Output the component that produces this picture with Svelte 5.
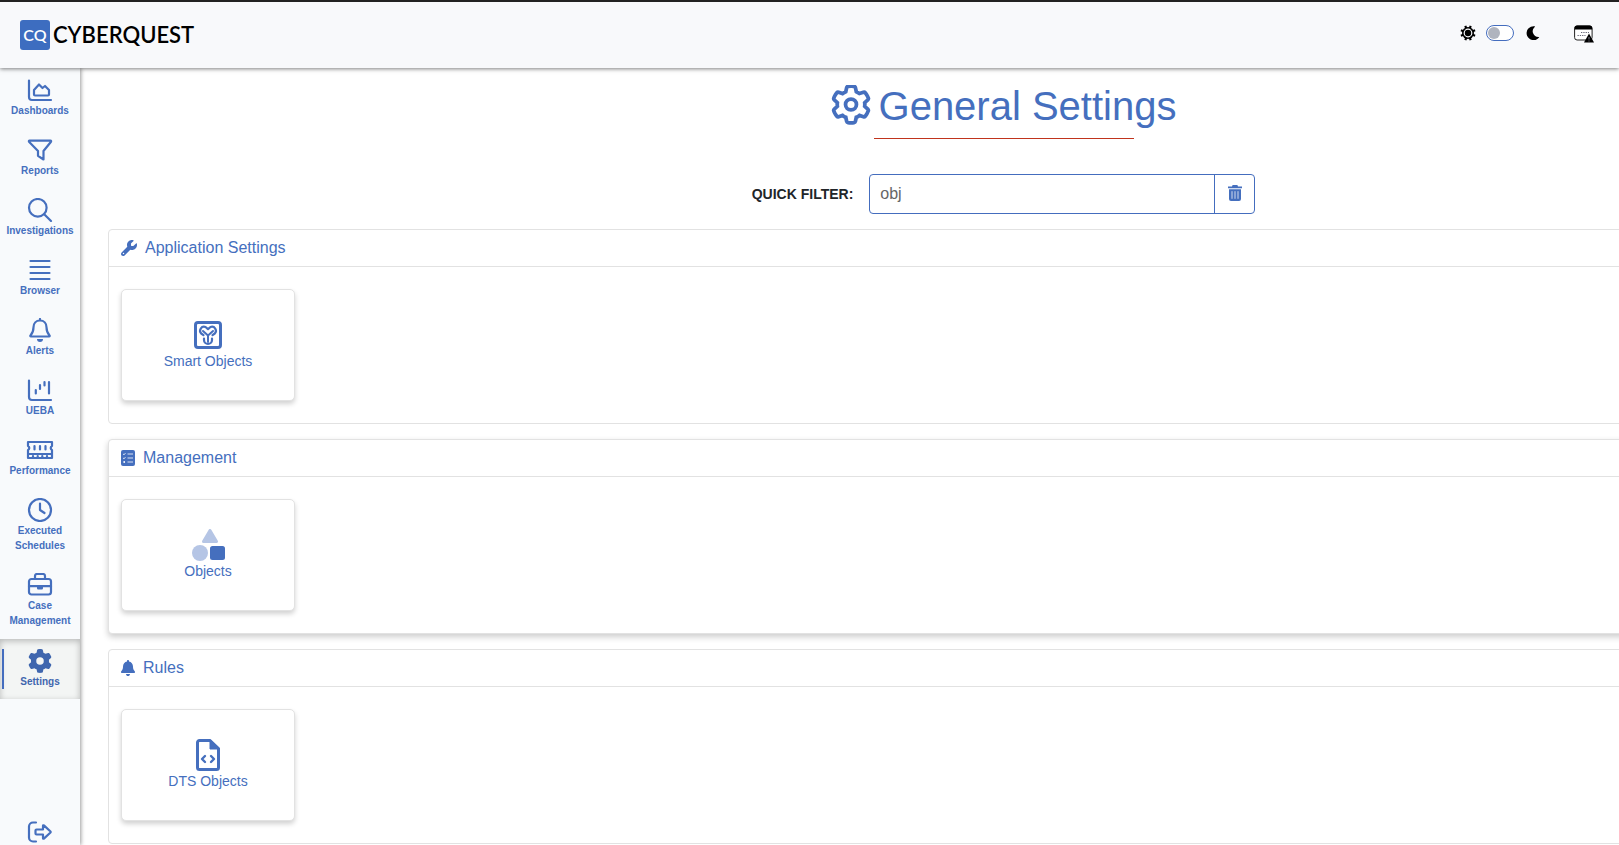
<script lang="ts">
  type Card = { label: string; icon: string };
  type Section = { title: string; icon: string; raised?: boolean; cards: Card[] };

  const gear =
    "M495.9 166.6c3.2 8.7 .5 18.4-6.4 24.6l-43.3 39.4c1.1 8.3 1.7 16.8 1.7 25.4s-.6 17.1-1.7 25.4l43.3 39.4c6.9 6.2 9.6 15.9 6.4 24.6c-4.4 11.9-9.7 23.3-15.8 34.3l-4.7 8.1c-6.6 11-14 21.4-22.1 31.2c-5.9 7.2-15.7 9.6-24.5 6.8l-55.7-17.7c-13.4 10.3-28.2 18.9-44 25.4l-12.5 57.1c-2 9.1-9 16.3-18.2 17.8c-13.8 2.3-28 3.5-42.5 3.5s-28.7-1.2-42.5-3.5c-9.2-1.5-16.2-8.7-18.2-17.8l-12.5-57.1c-15.8-6.5-30.6-15.1-44-25.4L83.1 425.9c-8.8 2.8-18.6 .3-24.5-6.8c-8.1-9.8-15.5-20.2-22.1-31.2l-4.7-8.1c-6.1-11-11.4-22.4-15.8-34.3c-3.2-8.7-.5-18.4 6.4-24.6l43.3-39.4C64.6 273.1 64 264.6 64 256s.6-17.1 1.7-25.4L22.4 191.2c-6.9-6.2-9.6-15.9-6.4-24.6c4.4-11.9 9.7-23.3 15.8-34.3l4.7-8.1c6.6-11 14-21.4 22.1-31.2c5.9-7.2 15.7-9.6 24.5-6.8l55.7 17.7c13.4-10.3 28.2-18.9 44-25.4l12.5-57.1c2-9.1 9-16.3 18.2-17.8C227.3 1.2 241.5 0 256 0s28.7 1.2 42.5 3.5c9.2 1.5 16.2 8.7 18.2 17.8l12.5 57.1c15.8 6.5 30.6 15.1 44 25.4l55.7-17.7c8.8-2.8 18.6-.3 24.5 6.8c8.1 9.8 15.5 20.2 22.1 31.2l4.7 8.1c6.1 11 11.4 22.4 15.8 34.3z";

  const nav = [
    { label: "Dashboards", icon: "area" },
    { label: "Reports", icon: "filter" },
    { label: "Investigations", icon: "search" },
    { label: "Browser", icon: "lines" },
    { label: "Alerts", icon: "bell" },
    { label: "UEBA", icon: "candles" },
    { label: "Performance", icon: "memory" },
    { label: "Executed Schedules", icon: "clock" },
    { label: "Case Management", icon: "briefcase" },
    { label: "Settings", icon: "gear", active: true }
  ];

  const sections: Section[] = [
    { title: "Application Settings", icon: "wrench", cards: [{ label: "Smart Objects", icon: "smart" }] },
    { title: "Management", icon: "list", raised: true, cards: [{ label: "Objects", icon: "shapes" }] },
    { title: "Rules", icon: "bellSolid", cards: [{ label: "DTS Objects", icon: "code" }] }
  ];

  let dark = $state(false);
  let query = $state("obj");

  let visible = $derived(
    sections
      .map((s) => ({ ...s, cards: s.cards.filter((c) => c.label.toLowerCase().includes(query.toLowerCase())) }))
      .filter((s) => s.cards.length > 0)
  );
</script>

{#snippet navIcon(name: string)}
  <svg class="nav-icon" viewBox="0 0 28 24" fill="none" stroke="currentColor" stroke-width="2.2" stroke-linecap="round" stroke-linejoin="round" aria-hidden="true">
    {#if name === "area"}
      <path d="M3 2.500v16.500a3 3 0 0 0 3 3h19" />
      <path d="M8 15.500V12l5-5.500 3.500 3.500 2.500-2 4 4v4.500a1 1 0 0 1-1 1H9a1 1 0 0 1-1-1z" />
    {:else if name === "filter"}
      <path d="M3.500 2.700h21c.6 0 .8.600.5 1L17.500 13v8.500L12 17.800V13L3 3.700c-.3-.4-.1-1 .5-1z" />
    {:else if name === "search"}
      <circle cx="11.800" cy="9.800" r="8.800" />
      <path d="M18.200 16.200L25 23" />
    {:else if name === "lines"}
      <path d="M4.500 3h19M4.500 9h19M4.500 15h19M4.500 21h19" />
    {:else if name === "bell"}
      <path d="M14 1v1.500M14 2.500c-4 0-6.500 3-6.500 6.700 0 3.500-.8 5.800-3 8.300-.4.500-.2 1 .4 1h18.200c.6 0 .8-.500.4-1-2.200-2.500-3-4.800-3-8.300 0-3.700-2.500-6.700-6.500-6.700z" />
      <path d="M11 21h6a3 3 0 0 1-6 0z" fill="currentColor" stroke="none" />
    {:else if name === "candles"}
      <path d="M3 2.500v16.500a3 3 0 0 0 3 3h19M9.800 12v3.500M14 7v4M18.500 4v3.500M23 4v11.500" />
    {:else if name === "memory"}
      <path d="M2 4h24v4a2.200 2.200 0 0 0 0 4v8H2v-8a2.200 2.200 0 0 0 0-4z" />
      <path d="M2.500 16h23M8.500 8v3.500M14 8v3.500M19.500 8v3.500M7 18v2M11.700 18v2M16.300 18v2M21 18v2" />
    {:else if name === "clock"}
      <circle cx="14" cy="12" r="11" />
      <path d="M14 5.500V12l4.500 3" />
    {:else if name === "briefcase"}
      <rect x="3" y="6" width="22" height="15.500" rx="2.500" />
      <path d="M9 5.500V3a2 2 0 0 1 2-2h6a2 2 0 0 1 2 2v2.500M3 13.200h22" />
      <path d="M11 13.200h6v2a1.200 1.200 0 0 1-1.200 1.200h-3.600a1.200 1.200 0 0 1-1.200-1.200z" fill="currentColor" stroke="none" />
    {:else if name === "gear"}
      <path transform="translate(2 0) scale(.046875)" fill="currentColor" stroke="none" fill-rule="evenodd" d="{gear}M256 336a80 80 0 1 0 0-160 80 80 0 1 0 0 160z" />
    {:else if name === "logout"}
      <path d="M10 2.500H7a4 4 0 0 0-4 4v11a4 4 0 0 0 4 4h3" />
      <path d="M10.500 9.500H17V5.800c0-.5.500-.7.900-.4l6.600 6.100c.3.300.3.700 0 1l-6.600 6.100c-.4.300-.9.100-.9-.4v-3.700h-6.500a1 1 0 0 1-1-1v-3a1 1 0 0 1 1-1z" />
    {/if}
  </svg>
{/snippet}

{#snippet sectionIcon(name: string)}
  {#if name === "wrench"}
    <svg width="16" height="16" viewBox="0 0 512 512" fill="currentColor" aria-hidden="true">
      <path d="M352 320c88.400 0 160-71.600 160-160c0-15.300-2.200-30.100-6.200-44.200c-3.100-10.800-16.400-13.200-24.300-5.300l-76.800 76.800c-3 3-7.100 4.700-11.300 4.700H336c-8.800 0-16-7.200-16-16V118.600c0-4.200 1.700-8.300 4.700-11.300l76.800-76.800c7.900-7.900 5.400-21.200-5.300-24.300C382.100 2.200 367.300 0 352 0C263.600 0 192 71.600 192 160c0 19.100 3.400 37.500 9.500 54.500L19.900 396.100C7.200 408.800 0 426.100 0 444.100C0 481.600 30.400 512 67.900 512c18 0 35.300-7.200 48-19.900L297.500 310.500c17 6.200 35.400 9.500 54.500 9.500zM80 408a24 24 0 1 1 0 48 24 24 0 1 1 0-48z" />
    </svg>
  {:else if name === "list"}
    <svg width="14" height="16" viewBox="0 0 14 16" fill="none" stroke="#fff" aria-hidden="true">
      <rect width="14" height="16" rx="2" fill="currentColor" stroke="none" />
      <path d="M6.500 4H12M6.500 8H12M6.500 12H12" stroke-opacity=".8" />
      <path d="M2.200 4l.8.800 1.400-1.600M2.200 8l.8.800 1.400-1.600" stroke-width=".9" />
      <circle cx="3.200" cy="12" r=".9" fill="#fff" stroke="none" />
    </svg>
  {:else}
    <svg width="14" height="16" viewBox="0 0 448 512" fill="currentColor" aria-hidden="true">
      <path d="M224 0c-17.700 0-32 14.300-32 32V51.200C119 66 64 130.600 64 208v18.800c0 47-17.300 92.400-48.500 127.600l-7.400 8.300c-8.400 9.400-10.400 22.900-5.300 34.400S19.400 416 32 416H416c12.600 0 24-7.400 29.200-18.900s3.100-25-5.300-34.400l-7.400-8.300C401.300 319.200 384 273.900 384 226.800V208c0-77.400-55-142-128-156.800V32c0-17.700-14.300-32-32-32zm45.300 493.300c12-12 18.700-28.300 18.700-45.300H160c0 17 6.700 33.300 18.700 45.300s28.300 18.700 45.300 18.700s33.300-6.700 45.300-18.700z" />
    </svg>
  {/if}
{/snippet}

{#snippet cardIcon(name: string)}
  <svg class="card-icon" viewBox="0 0 36 32" fill="none" stroke="currentColor" stroke-linecap="round" stroke-linejoin="round" aria-hidden="true">
    {#if name === "smart"}
      <rect x="5.500" y="3.500" width="25" height="25" rx="2.500" stroke-width="3" />
      <path d="M18 23v-6.500l-5-4.500M18 16.500l5-4.500" stroke-width="2" />
      <path d="M14 19.500v1.500a4 4 0 0 0 8 0v-1.500M13.500 16.200l-2.300-1.700A4 4 0 0 1 15.500 8l2.500 2.200L20.500 8a4 4 0 0 1 4.300 6.500l-2.300 1.700" stroke-width="2.200" />
    {:else if name === "shapes"}
      <path d="M20 1.500L26.500 12.500H13.500z" fill="#b5c5e5" stroke="#b5c5e5" stroke-width="3" />
      <circle cx="10" cy="24" r="8" fill="#b5c5e5" stroke="none" />
      <rect x="20" y="17" width="15" height="14" rx="2.500" fill="currentColor" stroke="none" />
    {:else}
      <path d="M20 1.500H9.500a2 2 0 0 0-2 2v25a2 2 0 0 0 2 2h17a2 2 0 0 0 2-2V9.500z" stroke-width="3" />
      <path d="M20 1v9h9z" fill="currentColor" stroke="currentColor" />
      <path d="M15 17l-3 3 3 3M21 17l3 3-3 3" stroke-width="2.400" />
    {/if}
  </svg>
{/snippet}

<div class="app">
  <header class="topbar">
    <a class="brand" href="#/">
      <span class="mark">CQ</span>
      <span class="name">CYBERQUEST</span>
    </a>
    <div class="tools">
      <svg width="16" height="16" viewBox="0 0 16 16" aria-hidden="true">
        <circle cx="8" cy="8" r="6" />
        <path d="M8 8L5.300.9M8 8L10.700.9M8 8l7.100-2.700M8 8l7.100 2.700M8 8l2.700 7.100M8 8l-2.700 7.100M8 8L.9 10.700M8 8L.9 5.300" stroke="#000" stroke-width="2.200" />
        <circle cx="8" cy="8" r="3.800" fill="none" stroke="#f8f9fb" stroke-width="1.200" />
      </svg>
      <input class="switch" type="checkbox" aria-label="Dark mode" bind:checked={dark} />
      <svg class="moon" width="14" height="14" viewBox="0 0 14 14" aria-hidden="true">
        <path d="M8.500.2A7 7 0 1 0 13 11.600c.3-.3.100-.8-.4-.7A5.700 5.700 0 0 1 8.700.9c.4-.3.300-.7-.2-.7z" />
      </svg>
      <button class="alarm" type="button" aria-label="Scheduled alerts">
        <svg width="20" height="18" viewBox="0 0 20 18" aria-hidden="true">
          <rect x=".6" y="1" width="17.500" height="14" rx="2.500" fill="#fff" stroke="#222" />
          <path d="M.5 4.500V3A2.500 2.500 0 0 1 3 .5h12.700A2.500 2.500 0 0 1 18.200 3v1.500z" />
          <path d="M7 7.500h8M3.500 10.500h8" stroke="#667" stroke-width="1.200" stroke-dasharray="1.300 1" />
          <path d="M15 8.500l5 9H10z" />
          <path d="M15 12v2.500M15 15.500v1" stroke="#889" stroke-width=".9" />
        </svg>
      </button>
    </div>
  </header>

  <div class="body">
    <nav class="sidebar">
      {#each nav as item}
        <a class="nav-item" class:active={item.active} href="#/{item.icon}">
          {@render navIcon(item.icon)}
          <span>{item.label}</span>
        </a>
      {/each}
      <a class="logout" href="#/logout" aria-label="Log out">{@render navIcon("logout")}</a>
    </nav>

    <main>
      <div class="content">
        <h1>
          <svg width="40" height="42" viewBox="0 0 512 538" fill="none" stroke="currentColor" aria-hidden="true">
            <path transform="translate(21 14) scale(.92)" stroke-width="52" d={gear} />
            <circle cx="256" cy="250" r="70" stroke-width="48" />
          </svg>
          General Settings
        </h1>
        <hr />

        <div class="filter">
          <label for="quick-filter">QUICK FILTER:</label>
          <div class="group">
            <input id="quick-filter" type="text" bind:value={query} />
            <button type="button" aria-label="Clear filter" onclick={() => (query = "")}>
              <svg width="14" height="16" viewBox="0 0 14 16" aria-hidden="true">
                <path d="M0 1.500h4L4.600 0h4.800l.6 1.500h4v1.700H0z" fill="currentColor" />
                <path d="M1 4.200h12V14a2 2 0 0 1-2 2H3a2 2 0 0 1-2-2z" fill="currentColor" />
                <path d="M4 6.200v7.600M7 6.200v7.600M10 6.200v7.600" stroke="#fff" stroke-opacity=".75" />
              </svg>
            </button>
          </div>
        </div>

        {#each visible as section}
          <section class="panel" class:raised={section.raised}>
            <h2>{@render sectionIcon(section.icon)}{section.title}</h2>
            <div class="cards">
              {#each section.cards as card}
                <a class="card" href="#/settings/{card.icon}">
                  {@render cardIcon(card.icon)}
                  <span>{card.label}</span>
                </a>
              {/each}
            </div>
          </section>
        {/each}
      </div>
    </main>
  </div>
</div>

<style>
  :global(body) {
    margin: 0;
    background: #fff;
    font-family: "Liberation Sans", Arial, Helvetica, sans-serif;
  }
  .app, .app * { box-sizing: border-box; }
  .app { min-height: 100vh; display: flex; flex-direction: column; overflow: hidden; color: #456fbe; }
  a { color: inherit; text-decoration: none; }
  svg { display: block; flex: none; }

  .topbar {
    position: relative; z-index: 2; height: 68px; padding: 0 25px 0 20px;
    display: flex; align-items: center; justify-content: space-between;
    background: #f8f9fb; border-top: 2px solid #222; box-shadow: 0 1px 4px rgba(0,0,0,.5);
  }
  .brand { display: flex; align-items: center; gap: 3px; color: #000; font-family: Lato, sans-serif; }
  .mark {
    width: 30px; height: 30px; border-radius: 3px; background: #3d6dc0; color: #fff;
    font-size: 16px; font-weight: 600; line-height: 30px; text-align: center;
  }
  .name { font-size: 22px; font-weight: 600; line-height: 30px; }
  .tools { display: flex; align-items: center; gap: 10px; padding-bottom: 5px; }
  .switch {
    appearance: none; width: 28px; height: 16px; margin: 0; padding: 1px;
    border: 1px solid #446dbe; border-radius: 8px; background: #fff; cursor: pointer;
  }
  .switch::before { content: ""; display: block; width: 12px; height: 12px; border-radius: 50%; background: #b0b4be; }
  .switch:checked::before { margin-left: 12px; background: #446dbe; }
  .moon { margin-left: 2px; }
  .alarm { margin-left: 24px; padding: 2px 0 0; border: 0; background: none; cursor: pointer; }

  .body { flex: 1; display: flex; }
  .sidebar {
    position: relative; z-index: 1; width: 80px; flex: none; display: flex; flex-direction: column;
    background: #f8fafc; box-shadow: 1px 0 4px rgba(0,0,0,.4);
  }
  .nav-item {
    position: relative; display: flex; flex-direction: column; align-items: center; gap: 1px; padding: 10px 4px;
    font-size: 10px; font-weight: 700; line-height: 15px; text-align: center;
  }
  .nav-icon { width: 28px; height: 24px; }
  .active {
    margin-top: 1px; color: #3f66ae; background: #f3f5f4;
    box-shadow: inset 0 2px 6px rgba(0,0,0,.25);
  }
  .active::before { content: ""; position: absolute; left: 2px; top: 10px; width: 2px; height: 40px; background: #446dbe; }
  .logout { display: flex; justify-content: center; margin-top: auto; padding-bottom: 1px; }

  main { flex: 1; min-width: 0; padding-left: 28px; }
  /* wider than the window, runs on past its right edge */
  .content { width: calc(100% + 280px); padding-top: 14px; }
  h1 {
    margin: 0; display: flex; align-items: center; justify-content: center; gap: 8px;
    font-size: 40px; font-weight: 400; line-height: 48px;
  }
  hr { width: 260px; height: 1px; margin: 8px auto 35px; border: 0; background: #c0341d; }

  .filter { display: flex; align-items: center; justify-content: center; gap: 16px; margin-bottom: 15px; }
  .filter label { color: #212529; font-size: 14px; font-weight: 700; }
  .group { display: flex; height: 40px; border: 1px solid #446dbe; border-radius: 4px; background: #fff; }
  .group input { width: 344px; padding: 0 10px; border: 0; outline: 0; background: none; color: #666; font: inherit; font-size: 16px; }
  .group button {
    width: 40px; padding: 0 0 2px; display: flex; align-items: center; justify-content: center;
    border: 0; border-left: 1px solid #446dbe; background: none; color: inherit; cursor: pointer;
  }

  .panel { margin-bottom: 15px; border: 1px solid #e2e2e2; border-radius: 4px; background: #fff; }
  .panel:last-child { margin-bottom: 0; }
  .raised, .panel:hover { box-shadow: 0 3px 6px rgba(0,0,0,.2); }
  h2 {
    margin: 0; height: 37px; padding: 0 12px; display: flex; align-items: center; gap: 8px;
    border-bottom: 1px solid #e2e2e2; font-size: 16px; font-weight: 400;
  }
  .cards { display: flex; gap: 12px; padding: 22px 12px; }
  .card {
    width: 174px; height: 112px; display: flex; flex-direction: column; align-items: center; justify-content: center;
    border: 1px solid #e2e2e2; border-radius: 5px; background: #fff; box-shadow: 0 3px 5px rgba(0,0,0,.18);
    font-size: 14px; line-height: 21px;
  }
  .card-icon { width: 36px; height: 32px; }
</style>
